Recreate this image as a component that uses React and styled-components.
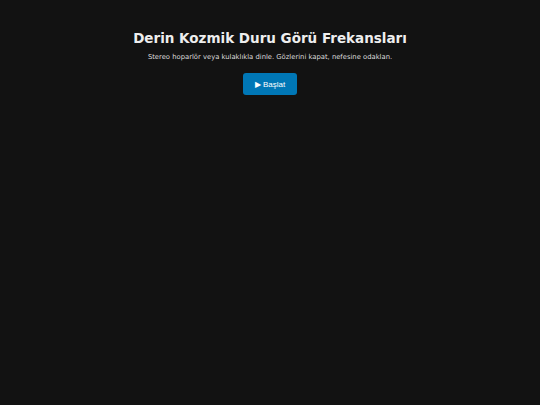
import React from "react";
import styled, { createGlobalStyle } from "styled-components";

const Global = createGlobalStyle`
  html, body {
    margin: 0;
    padding: 0;
    background: #121212;
    height: 100%;
  }
  body {
    font-family: "DejaVu Sans", sans-serif;
    color: #e6e6e6;
  }
`;

const Page = styled.div`
  display: flex;
  flex-direction: column;
  align-items: center;
  padding-top: 30px;
  text-align: center;
`;

const Title = styled.h1`
  margin: 0;
  font-size: 13.5px;
  font-weight: bold;
  color: #eeeeee;
  line-height: 16px;
`;

const Subtitle = styled.p`
  margin: 6px 0 0;
  font-size: 6.8px;
  color: #dddddd;
  line-height: 10px;
`;

const StartButton = styled.button`
  margin-top: 11px;
  width: 54px;
  height: 22px;
  border: none;
  border-radius: 3px;
  background: #0077b6;
  color: #ffffff;
  font-family: "Liberation Sans", Arial, sans-serif;
  font-size: 8px;
  cursor: pointer;
`;

export default function App() {
  return (
    <>
      <Global />
      <Page>
        <Title>Derin Kozmik Duru Görü Frekansları</Title>
        <Subtitle>Stereo hoparlör veya kulaklıkla dinle. Gözlerini kapat, nefesine odaklan.</Subtitle>
        <StartButton>▶ Başlat</StartButton>
      </Page>
    </>
  );
}
